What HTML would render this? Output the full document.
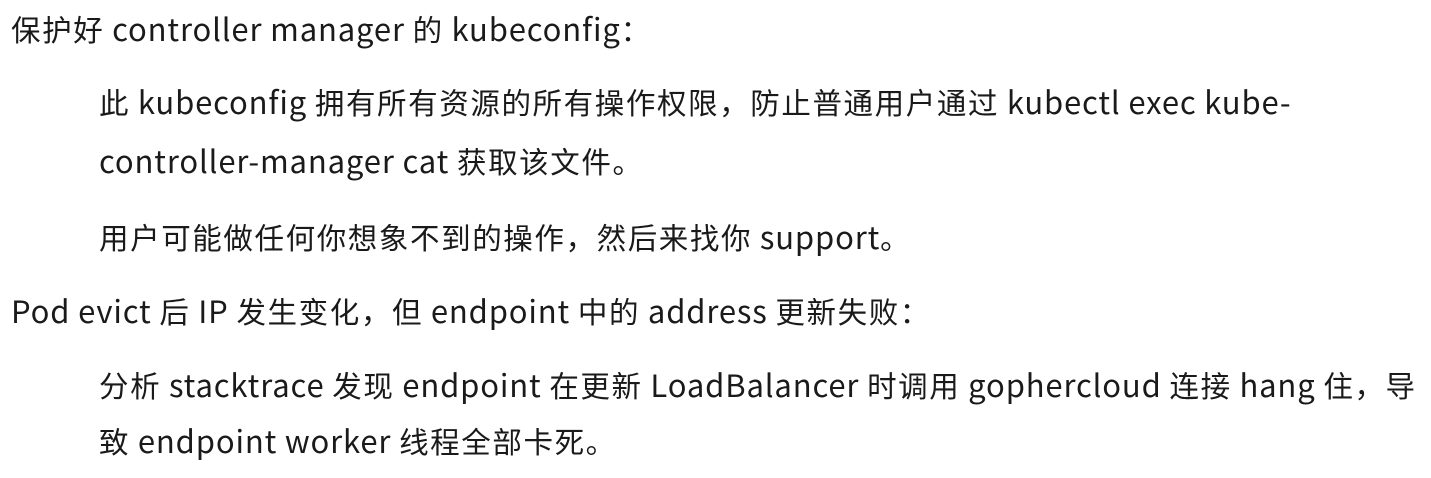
<!DOCTYPE html>
<html><head><meta charset="utf-8"><style>
html,body{margin:0;padding:0;background:#fff;}
body{width:1431px;height:478px;position:relative;overflow:hidden;font-family:"Noto Sans CJK SC","Liberation Sans",sans-serif;font-size:29.5px;color:#1a1a1a;letter-spacing:1.6px;}
.l{position:absolute;white-space:nowrap;line-height:40px;height:40px;}
.e{font-size:31px;letter-spacing:0.85px;}
</style></head><body>
<div class="l" style="left:11px;top:8px">保护好<span class="e"> controller manager </span>的<span class="e"> kubeconfig</span>：</div>
<div class="l" style="left:99px;top:81px">此<span class="e"> kubeconfig </span>拥有所有资源的所有操作权限，防止普通用户通过<span class="e"> kubectl exec kube-</span></div>
<div class="l" style="left:99px;top:140px"><span class="e">controller-manager cat </span>获取该文件。</div>
<div class="l" style="left:99px;top:216px">用户可能做任何你想象不到的操作，然后来找你<span class="e"> support</span>。</div>
<div class="l" style="left:11px;top:290px"><span class="e">Pod evict </span>后<span class="e"> IP </span>发生变化，但<span class="e"> endpoint </span>中的<span class="e"> address </span>更新失败：</div>
<div class="l" style="left:99px;top:364px">分析<span class="e"> stacktrace </span>发现<span class="e"> endpoint </span>在更新<span class="e"> LoadBalancer </span>时调用<span class="e"> gophercloud </span>连接<span class="e"> hang </span>住，导</div>
<div class="l" style="left:99px;top:420px">致<span class="e"> endpoint worker </span>线程全部卡死。</div>
</body></html>
